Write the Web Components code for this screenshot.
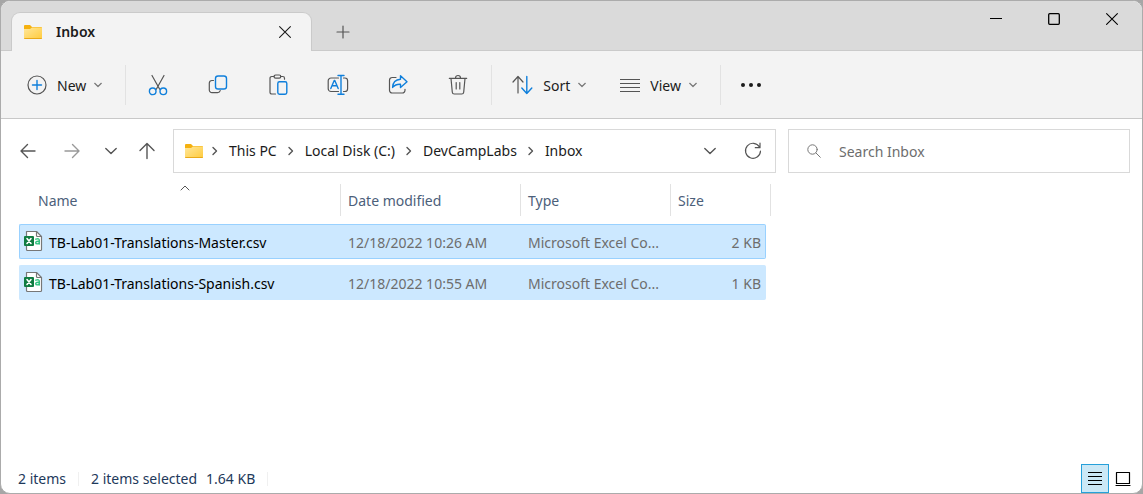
<!DOCTYPE html>
<html lang="en">
<head>
<meta charset="utf-8">
<meta name="viewport" content="width=device-width, initial-scale=1">
<title>Inbox</title>
<style>
  html { background: #a6a6a6; }
  body {
    margin: 0;
    color: #1b1b1b;
    font: 14px/20px "Noto Sans", "Open Sans", sans-serif;
  }
</style>
</head>
<body>
<explorer-window>
  <title-bar slot="title" label="Inbox"></title-bar>
  <command-bar slot="commands"></command-bar>
  <address-row slot="address"></address-row>
  <file-list></file-list>
  <status-bar slot="status"></status-bar>
</explorer-window>

<script>
const ICONS = {
  folder: [20, 18, `<defs><linearGradient id="g" x1="0" y1="0" x2="1" y2="1"><stop offset="0" stop-color="#ffe79b"/><stop offset="1" stop-color="#ffcb3d"/></linearGradient></defs><g stroke="none"><path d="M1 3q0-1 1-1h5l2 2h9q1 0 1 1v8H1z" fill="#f5b10f"/><path d="M1 6h6l2-1.500h10V15q0 1-1 1H2q-1 0-1-1z" fill="url(#g)"/><path d="M1 15h18q0 1-1 1H2q-1 0-1-1z" fill="#e9a919"/></g>`],
  close: [12, 12, `<path d="M.6.6l10.800 10.800M11.400.6L.6 11.400" stroke-width="1.100"/>`],
  plus: [14, 14, `<path d="M7 1v12M1 7h12"/>`],
  minimize: [12, 14, `<path d="M0 6.500h12" stroke-width="1" stroke-linecap="butt"/>`],
  maximize: [14, 14, `<rect x="1.700" y="1.700" width="10.600" height="10.600" rx="1" stroke-width="1.300"/>`],
  create: [20, 20, `<circle cx="10" cy="10" r="9"/><path class="b" d="M10 5.500v9M5.500 10h9"/>`],
  down: [8, 8, `<path d="M.7 2.300L4 5.500l3.300-3.200"/>`],
  cut: [20, 22, `<path d="M4 1.500l7.700 13.700M16 1.500L8.300 15.200"/><g class="b"><circle cx="4.700" cy="17.300" r="3.300"/><circle cx="15.300" cy="17.300" r="3.300"/></g>`],
  copy: [20, 22, `<path d="M5.500 6.500H4A2.700 2.700 0 0 0 1.300 9v7A2.700 2.700 0 0 0 4 18.700h5.500q2.200 0 2.700-2"/><rect class="b" x="7.500" y="2" width="11" height="13" rx="2.600"/>`],
  paste: [20, 22, `<path d="M7.500 20H3.700A1.700 1.700 0 0 1 2 18.300V4.200a1.700 1.700 0 0 1 1.700-1.700H6M12.500 2.500h2.300a1.700 1.700 0 0 1 1.700 1.700v1"/><rect x="6" y="1" width="6.800" height="3.200" rx="1.600"/><rect class="b" x="9.800" y="7.800" width="9" height="12.400" rx="1.700"/>`],
  rename: [22, 22, `<path d="M11.500 17.500H4A2.800 2.800 0 0 1 1.200 14.700V6.800A2.800 2.800 0 0 1 4 4h7.500M16.500 4h1.300a2.800 2.800 0 0 1 2.800 2.800v7.900a2.800 2.800 0 0 1-2.800 2.800h-1.300"/><path class="b" d="M14 1.500v18.500M11 1.500h6M11 20.200h6M3.800 14.500L7.200 6.500h.6l3.400 8M5 11.800h5"/>`],
  share: [20, 22, `<path d="M8 3.500H4.200A2.700 2.700 0 0 0 1.500 6.200v10.100A2.700 2.700 0 0 0 4.200 19h10.100a2.700 2.700 0 0 0 2.700-2.700v-1"/><path class="b" d="M12.500 1.800l6.500 6-6.500 5.800v-3.400c-3.600-.2-6 .9-7.900 3.200.2-4.600 3-7.900 7.900-8.200z"/>`],
  trash: [20, 22, `<path d="M1.300 4.300h17.400M3 4.500l1.300 13.700A2 2 0 0 0 6.300 20h7.400a2 2 0 0 0 2-1.800L17 4.500M7.500 4a2.500 2.500 0 0 1 5 0M8.200 8.500v6.500M11.800 8.500v6.500"/>`],
  sort: [21, 20, `<path d="M6 18V1.800M1 7l5-5.500L11 7"/><path class="b" d="M14.800 1.500v17M9.800 13l5 5.500 5-5.500"/>`],
  view: [20, 20, `<path d="M0 4.500h20M0 8.500h20M0 12.500h20M0 16.500h20"/>`],
  more: [22, 6, `<g fill="#1b1b1b" stroke="none"><circle cx="3" cy="3" r="2"/><circle cx="11" cy="3" r="2"/><circle cx="19" cy="3" r="2"/></g>`],
  back: [16, 18, `<path d="M15 9H1.500M7.500 2.500L1 9l6.500 6.500" stroke-width="1.400"/>`],
  forward: [16, 18, `<path d="M1 9h13.500M8.500 2.500L15 9l-6.500 6.500" stroke-width="1.400"/>`],
  recent: [14, 14, `<path d="M1.800 4.500L7 9.500l5.200-5" stroke-width="1.400"/>`],
  up: [16, 18, `<path d="M8 16.500V2M1 8.500l7-7 7 7" stroke-width="1.400"/>`],
  right: [8, 10, `<path d="M2 1.500L5.500 5 2 8.500" stroke-width="1.400"/>`],
  refresh: [18, 18, `<path d="M15.500 5A7.500 7.500 0 1 0 16.500 9M16 1v4.700h-4.700"/>`],
  search: [16, 16, `<g stroke-width="1"><circle cx="6.500" cy="6.500" r="4.700"/><path d="M10 10l4.300 4.300"/></g>`],
  sorted: [10, 6, `<path d="M1 5l4-4 4 4" stroke-width="1"/>`],
  details: [14, 14, `<path d="M0 .5h14M0 4.500h14M0 8.500h14M0 12.500h14"/>`],
  thumbs: [16, 16, `<rect x="1.500" y="1.500" width="13" height="11"/><path d="M1 14.500h14"/>`],
  csv: [20, 22, `<path d="M3.500 1.500h10l5 5v13q0 1-1 1h-13q-1 0-1-1z" fill="#fff" stroke="#777"/><path d="M13.500 1.500v4q0 1 1 1h4" stroke="#777"/><rect x="1" y="6" width="10" height="10" rx="1" fill="#107c41" stroke="none"/><path d="M4 8.500l4 5M8 8.500l-4 5" stroke="#fff" stroke-width="1.600"/><path d="M12.800 9.200q3.500-1.300 3.500 1v3.800M16.300 11.300c-2-.2-3.600.2-3.600 1.400 0 1.500 2.700 1.700 3.600 0" stroke="#33c481" stroke-width="1.400"/>`]
};

function define(name, html, setup) {
  const template = document.createElement("template");
  template.innerHTML = html;
  customElements.define(name, class extends HTMLElement {
    constructor() {
      super();
      this.attachShadow({ mode: "open" }).append(template.content.cloneNode(true));
    }
    connectedCallback() { if (setup) setup(this, this.shadowRoot); }
  });
}

define("ui-icon", `<style>
  :host { display: inline-flex; flex: none; }
  svg { display: block; fill: none; stroke: currentColor; stroke-width: 1.2; stroke-linecap: round; stroke-linejoin: round; }
  .b { stroke: #0f7fdb; stroke-width: 1.4; }
</style><svg aria-hidden="true"></svg>`, (host, root) => {
  const [w, h, body] = ICONS[host.getAttribute("name")];
  const svg = root.querySelector("svg");
  svg.setAttribute("width", w);
  svg.setAttribute("height", h);
  svg.setAttribute("viewBox", `0 0 ${w} ${h}`);
  svg.innerHTML = body;
});

const BUTTON = `button { display: inline-flex; align-items: center; justify-content: center; padding: 0; border: 0; background: none; color: inherit; font: inherit; }`;

define("explorer-window", `<style>
  :host { display: flex; flex-direction: column; box-sizing: border-box; min-height: 100vh; overflow: hidden; border: 1px solid #ababab; border-radius: 10px; background: #fff; }
  main { flex: 1; }
</style>
<slot name="title"></slot><slot name="commands"></slot><slot name="address"></slot>
<main><slot></slot></main>
<slot name="status"></slot>`);

define("title-bar", `<style>
  :host { display: flex; height: 49px; background: #dadada; border-bottom: 1px solid #cacaca; }
  ${BUTTON}
  .tab { display: flex; align-items: center; box-sizing: border-box; width: 301px; height: 39px; margin: 11px 0 0 10px; padding: 0 20px 0 11px; gap: 13px; border: 1px solid #cacaca; border-bottom: 0; border-radius: 9px 9px 0 0; background: #f3f3f3; color: #1b1b1b; font-weight: 600; }
  .tab span { flex: 1; }
  .add { width: 62px; padding-top: 13px; color: #555; }
  .caption { display: flex; height: 35px; margin: 0 1px 0 auto; color: #000; }
  .caption button { width: 58px; }
</style>
<div class="tab"><ui-icon name="folder"></ui-icon><span></span><button aria-label="Close tab"><ui-icon name="close"></ui-icon></button></div>
<button class="add" aria-label="New tab"><ui-icon name="plus"></ui-icon></button>
<div class="caption">
  <button aria-label="Minimize"><ui-icon name="minimize"></ui-icon></button>
  <button aria-label="Maximize"><ui-icon name="maximize"></ui-icon></button>
  <button aria-label="Close"><ui-icon name="close"></ui-icon></button>
</div>`, (host, root) => { root.querySelector("span").textContent = host.getAttribute("label"); });

define("command-button", `<style>
  :host { display: flex; width: 60px; color: #555; }
  ${BUTTON}
  button { flex: 1; }
  :host([menu]) { width: auto; }
  :host([menu]) button { gap: 10px; padding: 0 23px 0 11px; }
  .arrow { display: inline-flex; margin-left: -2px; color: #777; }
  .text { padding-top: 2px; color: #1b1b1b; }
</style><button></button>`,
(host, root) => {
  const button = root.querySelector("button");
  const icon = `<ui-icon name="${host.getAttribute("icon")}"></ui-icon>`;
  if (host.hasAttribute("menu")) {
    button.innerHTML = `${icon}<span class="text"><slot></slot></span><span class="arrow"><ui-icon name="down"></ui-icon></span>`;
  } else {
    button.innerHTML = icon;
    button.setAttribute("aria-label", host.getAttribute("label"));
  }
});

define("command-bar", `<style>
  :host { display: flex; align-items: center; height: 67px; padding-left: 15px; background: #f3f3f3; border-bottom: 1px solid #c8c8c8; }
  command-button { height: 40px; }
  i { width: 1px; height: 40px; background: #e2e2e2; }
  .group { display: flex; margin: 0 3px 0 2px; }
  .group + i { margin-right: 9px; }
</style>
<command-button icon="create" menu>New</command-button><i></i>
<div class="group">
  <command-button icon="cut" label="Cut"></command-button>
  <command-button icon="copy" label="Copy"></command-button>
  <command-button icon="paste" label="Paste"></command-button>
  <command-button icon="rename" label="Rename"></command-button>
  <command-button icon="share" label="Share"></command-button>
  <command-button icon="trash" label="Delete"></command-button>
</div><i></i>
<command-button icon="sort" menu>Sort</command-button>
<command-button icon="view" menu>View</command-button><i></i>
<command-button icon="more" label="See more"></command-button>`);

define("address-row", `<style>
  :host { display: flex; padding: 10px 12px 0 5px; }
  ${BUTTON}
  nav { display: flex; width: 167px; color: #555; }
  nav button { width: 38px; }
  nav .move { width: 44px; }
  nav .pick { width: 34px; }
  .off { color: #999; }
  .box { display: flex; align-items: center; box-sizing: border-box; height: 44px; border: 1px solid #d9d9d9; background: #fff; }
  .path { flex: 1; padding: 0 1px 0 10px; color: #555; }
  ol { display: flex; flex: 1; margin: 0 0 0 -3px; padding: 0; list-style: none; }
  li { display: flex; align-items: center; }
  li ui-icon { padding: 0 10px; }
  a { color: #1b1b1b; text-decoration: none; }
  .path button { width: 43px; }
  .search { width: 342px; margin-left: 12px; padding-left: 17px; gap: 17px; color: #777; }
  input { flex: 1; min-width: 0; padding: 1px 0 0; border: 0; outline: 0; background: none; color: #1b1b1b; font: inherit; }
  input::placeholder { color: #6d6d6d; }
</style>
<nav aria-label="History">
  <button class="move" aria-label="Back"><ui-icon name="back"></ui-icon></button>
  <button class="move off" aria-label="Forward" disabled><ui-icon name="forward"></ui-icon></button>
  <button class="pick" aria-label="Recent locations"><ui-icon name="recent"></ui-icon></button>
  <button aria-label="Up"><ui-icon name="up"></ui-icon></button>
</nav>
<div class="box path"><ui-icon name="folder"></ui-icon>
  <ol>
    <li><ui-icon name="right"></ui-icon><a href="#pc">This PC</a></li>
    <li><ui-icon name="right"></ui-icon><a href="#c">Local Disk (C:)</a></li>
    <li><ui-icon name="right"></ui-icon><a href="#labs">DevCampLabs</a></li>
    <li><ui-icon name="right"></ui-icon><a href="#inbox">Inbox</a></li>
  </ol>
  <button aria-label="Previous locations"><ui-icon name="recent"></ui-icon></button>
  <button aria-label="Refresh"><ui-icon name="refresh"></ui-icon></button>
</div>
<div class="box search"><ui-icon name="search"></ui-icon><input type="text" aria-label="Search Inbox" placeholder="Search Inbox"></div>`);

define("file-list", `<style>
  :host { display: block; padding: 5px 18px 0; }
  table { table-layout: fixed; width: 752px; border-spacing: 0 6px; }
  .name { width: 322px; } .date { width: 180px; } .type { width: 150px; } .size { width: 95px; } .tail { width: 5px; }
  th { position: relative; box-sizing: border-box; height: 34px; padding: 0 7px; color: #4c607a; font-weight: 400; text-align: left; background: linear-gradient(#e2e2e2, #e2e2e2) right top / 1px 32px no-repeat; }
  th:first-child { padding-left: 19px; }
  th:nth-child(4) { background: none; }
  th:last-child { padding: 0; }
  th ui-icon { position: absolute; top: 1px; left: 50%; color: #555; }
  td { box-sizing: border-box; height: 35px; padding: 2px 7px 0; border: solid #cce8ff; border-width: 1px 0; background: #cce8ff; color: #6d6d6d; white-space: nowrap; overflow: hidden; text-overflow: ellipsis; }
  td:first-child { padding-left: 3px; border-left-width: 1px; border-radius: 2px 0 0 2px; color: #000; }
  td:nth-child(4) { padding-right: 4px; border-right-width: 1px; border-radius: 0 2px 2px 0; text-align: right; }
  .focus td { border-color: #99d1ff; }
  .file { display: flex; align-items: center; gap: 6px; }
  .file ui-icon { padding-bottom: 3px; }
</style>
<table>
  <colgroup><col class="name"><col class="date"><col class="type"><col class="size"><col class="tail"></colgroup>
  <thead><tr><th scope="col">Name<ui-icon name="sorted"></ui-icon></th><th scope="col">Date modified</th><th scope="col">Type</th><th scope="col">Size</th><th></th></tr></thead>
  <tbody>
    <tr class="focus"><td><span class="file"><ui-icon name="csv"></ui-icon>TB-Lab01-Translations-Master.csv</span></td><td>12/18/2022 10:26 AM</td><td>Microsoft Excel Co...</td><td>2 KB</td></tr>
    <tr><td><span class="file"><ui-icon name="csv"></ui-icon>TB-Lab01-Translations-Spanish.csv</span></td><td>12/18/2022 10:55 AM</td><td>Microsoft Excel Co...</td><td>1 KB</td></tr>
  </tbody>
</table>`);

define("status-bar", `<style>
  :host { display: flex; align-items: center; height: 29px; padding: 0 5px 0 17px; color: #1e395b; }
  ${BUTTON}
  span { padding-right: 12px; border-right: 1px solid #f0f0f0; line-height: 14px; }
  span + span { padding-left: 12px; }
  b { font-weight: 400; margin-right: 9px; }
  div { display: flex; margin-left: auto; color: #000; }
  button { box-sizing: border-box; width: 28px; height: 29px; }
  .on { border: 1px solid #26a0da; background: #cbe8f6; }
</style>
<span>2 items</span><span><b>2 items selected</b>1.64 KB</span>
<div><button class="on" aria-label="Details view"><ui-icon name="details"></ui-icon></button><button aria-label="Thumbnail view"><ui-icon name="thumbs"></ui-icon></button></div>`);
</script>
</body>
</html>
